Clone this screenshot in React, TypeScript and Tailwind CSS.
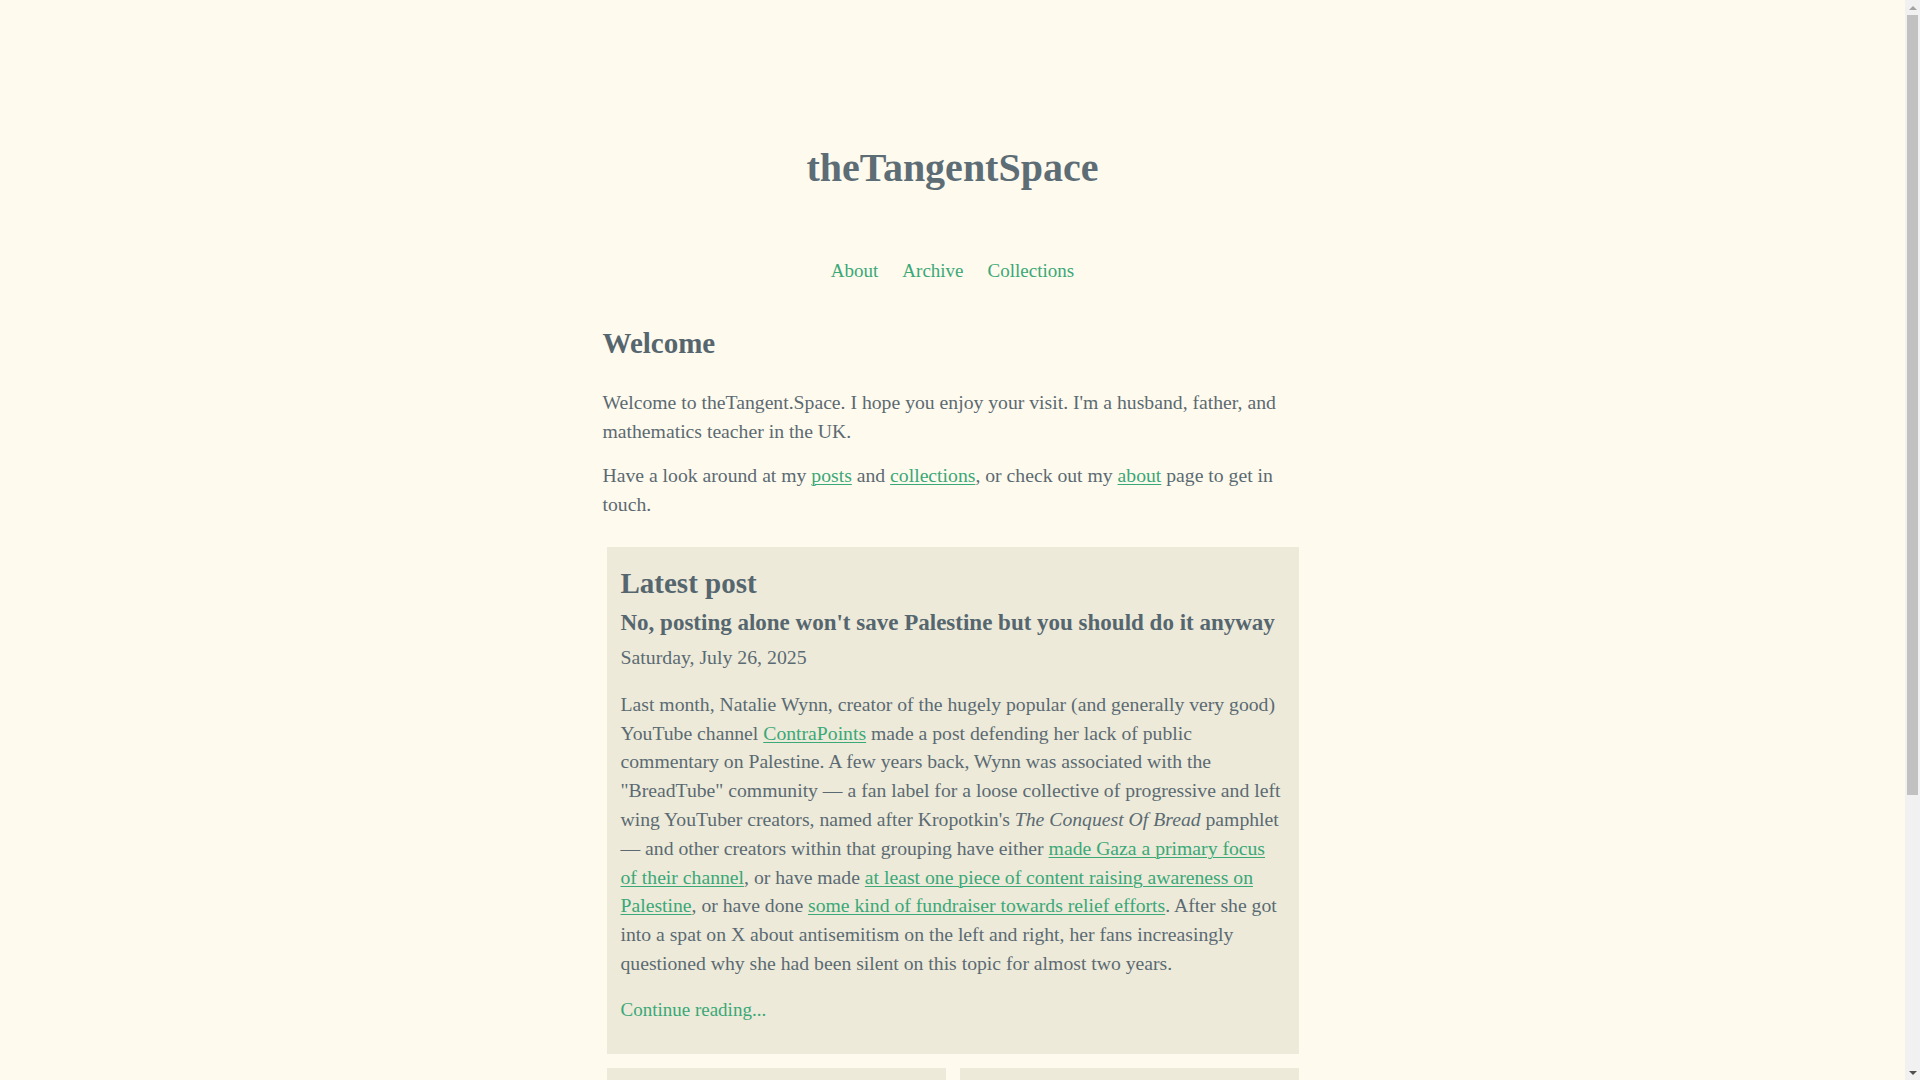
const link = 'text-[#3aa877] underline underline-offset-2 decoration-1';

function Nav() {
  return (
    <nav className="mt-[65px] flex justify-center gap-[24px] text-[19px] leading-[28.8px] text-[#3aa877]">
      <a href="#">About</a>
      <a href="#">Archive</a>
      <a href="#">Collections</a>
    </nav>
  );
}

function LatestPost() {
  return (
    <section className="mx-[4px] mt-[28px] bg-[#edeada] px-[14px] pt-[18px] pb-[29px]">
      <h2 className="text-[29px] font-bold leading-[36px] text-[#56666f]">Latest post</h2>
      <h3 className="mt-[7px] text-[23px] font-bold leading-[30px] text-[#56666f]">
        No, posting alone won't save Palestine but you should do it anyway
      </h3>
      <p className="mt-[5px] text-[19.8px] leading-[28.8px]">Saturday, July 26, 2025</p>
      <p className="mt-[18px] text-[19.7px] leading-[28.8px]">
        Last month, Natalie Wynn, creator of the hugely popular (and generally very good) YouTube channel{' '}
        <a href="#" className={link}>ContraPoints</a> made a post defending her lack of public commentary on
        Palestine. A few years back, Wynn was associated with the "BreadTube" community — a fan label for a loose
        collective of progressive and left wing YouTuber creators, named after Kropotkin's{' '}
        <em>The Conquest Of Bread</em> pamphlet — and other creators within that grouping have either{' '}
        <a href="#" className={link}>made Gaza a primary focus of their channel</a>, or have made{' '}
        <a href="#" className={link}>at least one piece of content raising awareness on Palestine</a>, or have done{' '}
        <a href="#" className={link}>some kind of fundraiser towards relief efforts</a>. After she got into a spat on
        X about antisemitism on the left and right, her fans increasingly questioned why she had been silent on this
        topic for almost two years.
      </p>
      <a href="#" className="mt-[18px] block text-[19px] leading-[28.8px] text-[#3aa877]">
        Continue reading...
      </a>
    </section>
  );
}

// mimics the browser's classic scrollbar seen in the screenshot
function Scrollbar() {
  return (
    <aside className="flex w-[15px] shrink-0 flex-col items-center bg-[#f1f1f1]">
      <div className="flex h-[15px] items-center justify-center">
        <div className="h-0 w-0 border-x-[4px] border-b-[4px] border-x-transparent border-b-[#a3a3a3]" />
      </div>
      <div className="h-[780px] w-[11px] bg-[#c1c1c1]" />
      <div className="flex-1" />
      <div className="flex h-[15px] items-center justify-center">
        <div className="h-0 w-0 border-x-[4px] border-t-[4px] border-x-transparent border-t-[#505050]" />
      </div>
    </aside>
  );
}

export default function App() {
  return (
    <div className="flex h-screen overflow-hidden bg-[#fffaee] font-['Liberation_Serif',serif] text-[#5b6a72]">
      <div className="min-w-0 flex-1 pb-[60px]">
        <header className="pt-[144px] text-center">
          <h1 className="text-[40px] font-bold leading-[48px] text-[#5d6d76]">theTangentSpace</h1>
          <Nav />
        </header>
        <main className="mx-auto w-[700px]">
          <h2 className="mt-[39px] text-[29px] font-bold leading-[36px] text-[#56666f]">Welcome</h2>
          <p className="mt-[27px] text-[19.7px] leading-[28.8px]">
            Welcome to theTangent.Space. I hope you enjoy your visit. I'm a husband, father, and mathematics teacher
            in the UK.
          </p>
          <p className="mt-[16px] text-[19.7px] leading-[28.8px]">
            Have a look around at my <a href="#" className={link}>posts</a> and{' '}
            <a href="#" className={link}>collections</a>, or check out my <a href="#" className={link}>about</a>{' '}
            page to get in touch.
          </p>
          <LatestPost />
          <div className="mx-[4px] mt-[14px] grid grid-cols-2 gap-[14px]">
            <div className="h-[240px] bg-[#edeada]" />
            <div className="h-[240px] bg-[#edeada]" />
          </div>
        </main>
      </div>
      <Scrollbar />
    </div>
  );
}
